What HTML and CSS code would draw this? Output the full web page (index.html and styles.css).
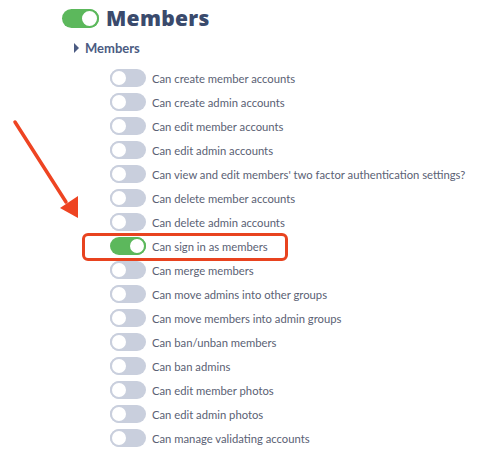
FILE: index.html
```html
<!DOCTYPE html>
<html>
<head>
<meta charset="utf-8">
<link rel="stylesheet" href="styles.css">
</head>
<body>
<div class="page">
  <div class="head">
    <span class="toggle big on"><span class="knob"></span></span>
    <span class="title">Members</span>
  </div>
  <div class="sub">
    <span class="caret"></span>
    <span class="subtitle">Members</span>
  </div>
  <ul class="perms">
    <li><span class="toggle"><span class="knob"></span></span><span class="label">Can create member accounts</span></li>
    <li><span class="toggle"><span class="knob"></span></span><span class="label">Can create admin accounts</span></li>
    <li><span class="toggle"><span class="knob"></span></span><span class="label">Can edit member accounts</span></li>
    <li><span class="toggle"><span class="knob"></span></span><span class="label">Can edit admin accounts</span></li>
    <li><span class="toggle"><span class="knob"></span></span><span class="label">Can view and edit members' two factor authentication settings?</span></li>
    <li><span class="toggle"><span class="knob"></span></span><span class="label">Can delete member accounts</span></li>
    <li><span class="toggle"><span class="knob"></span></span><span class="label">Can delete admin accounts</span></li>
    <li class="highlight"><span class="toggle on"><span class="knob"></span></span><span class="label">Can sign in as members</span></li>
    <li><span class="toggle"><span class="knob"></span></span><span class="label">Can merge members</span></li>
    <li><span class="toggle"><span class="knob"></span></span><span class="label">Can move admins into other groups</span></li>
    <li><span class="toggle"><span class="knob"></span></span><span class="label">Can move members into admin groups</span></li>
    <li><span class="toggle"><span class="knob"></span></span><span class="label">Can ban/unban members</span></li>
    <li><span class="toggle"><span class="knob"></span></span><span class="label">Can ban admins</span></li>
    <li><span class="toggle"><span class="knob"></span></span><span class="label">Can edit member photos</span></li>
    <li><span class="toggle"><span class="knob"></span></span><span class="label">Can edit admin photos</span></li>
    <li><span class="toggle"><span class="knob"></span></span><span class="label">Can manage validating accounts</span></li>
  </ul>
  <svg class="arrow" width="90" height="110" viewBox="0 0 90 110">
    <line x1="15" y1="12" x2="66" y2="92" stroke="#ee4422" stroke-width="3.5" stroke-linecap="round"/>
    <polygon points="60,98 78,86 78,108" fill="#ee4422"/>
  </svg>
</div>
</body>
</html>
```
FILE: styles.css
```css
html, body {
  margin: 0;
  padding: 0;
  background: #ffffff;
}
.page {
  position: relative;
  width: 500px;
  height: 451px;
  overflow: hidden;
  font-family: "Lato", "Open Sans", sans-serif;
}
.head {
  display: flex;
  align-items: center;
  gap: 7px;
  padding: 7px 0 0 62px;
  height: 22px;
}
.title {
  font-family: "Open Sans", sans-serif;
  font-size: 21px;
  font-weight: 800;
  letter-spacing: 0.3px;
  color: #3a4a6c;
  line-height: 22px;
}
.sub {
  display: flex;
  align-items: center;
  gap: 6px;
  padding-left: 74px;
  margin-top: 9px;
  height: 20px;
}
.caret {
  width: 0;
  height: 0;
  border-top: 5px solid transparent;
  border-bottom: 5px solid transparent;
  border-left: 5px solid #4b5b82;
}
.subtitle {
  font-size: 13px;
  font-weight: 700;
  color: #4b5b82;
}
.perms {
  list-style: none;
  margin: 8px 0 0 0;
  padding: 0 0 0 110px;
}
.perms li {
  display: flex;
  align-items: center;
  gap: 6px;
  height: 24px;
}
.label {
  font-size: 11.25px;
  color: #5a6174;
  white-space: nowrap;
}
.toggle {
  position: relative;
  display: inline-block;
  width: 36px;
  height: 18px;
  border-radius: 9px;
  background: #c9cfdd;
  flex: none;
}
.toggle .knob {
  position: absolute;
  left: 0;
  top: 0;
  width: 14px;
  height: 14px;
  border-radius: 50%;
  background: #ffffff;
  border: 2px solid #c9cfdd;
}
.toggle.on {
  background: #5cb85c;
}
.toggle.on .knob {
  left: auto;
  right: 0;
  border-color: #5cb85c;
}
.toggle.big {
  width: 37px;
  height: 19px;
  border-radius: 10px;
}
.toggle.big .knob {
  width: 15px;
  height: 15px;
}
.perms li.highlight {
  position: relative;
}
.perms li.highlight::before {
  content: "";
  position: absolute;
  left: -28px;
  top: -1px;
  width: 200px;
  height: 22px;
  border: 3px solid #e8431f;
  border-radius: 6px;
}
.arrow {
  position: absolute;
  left: 0;
  top: 110px;
}
```
